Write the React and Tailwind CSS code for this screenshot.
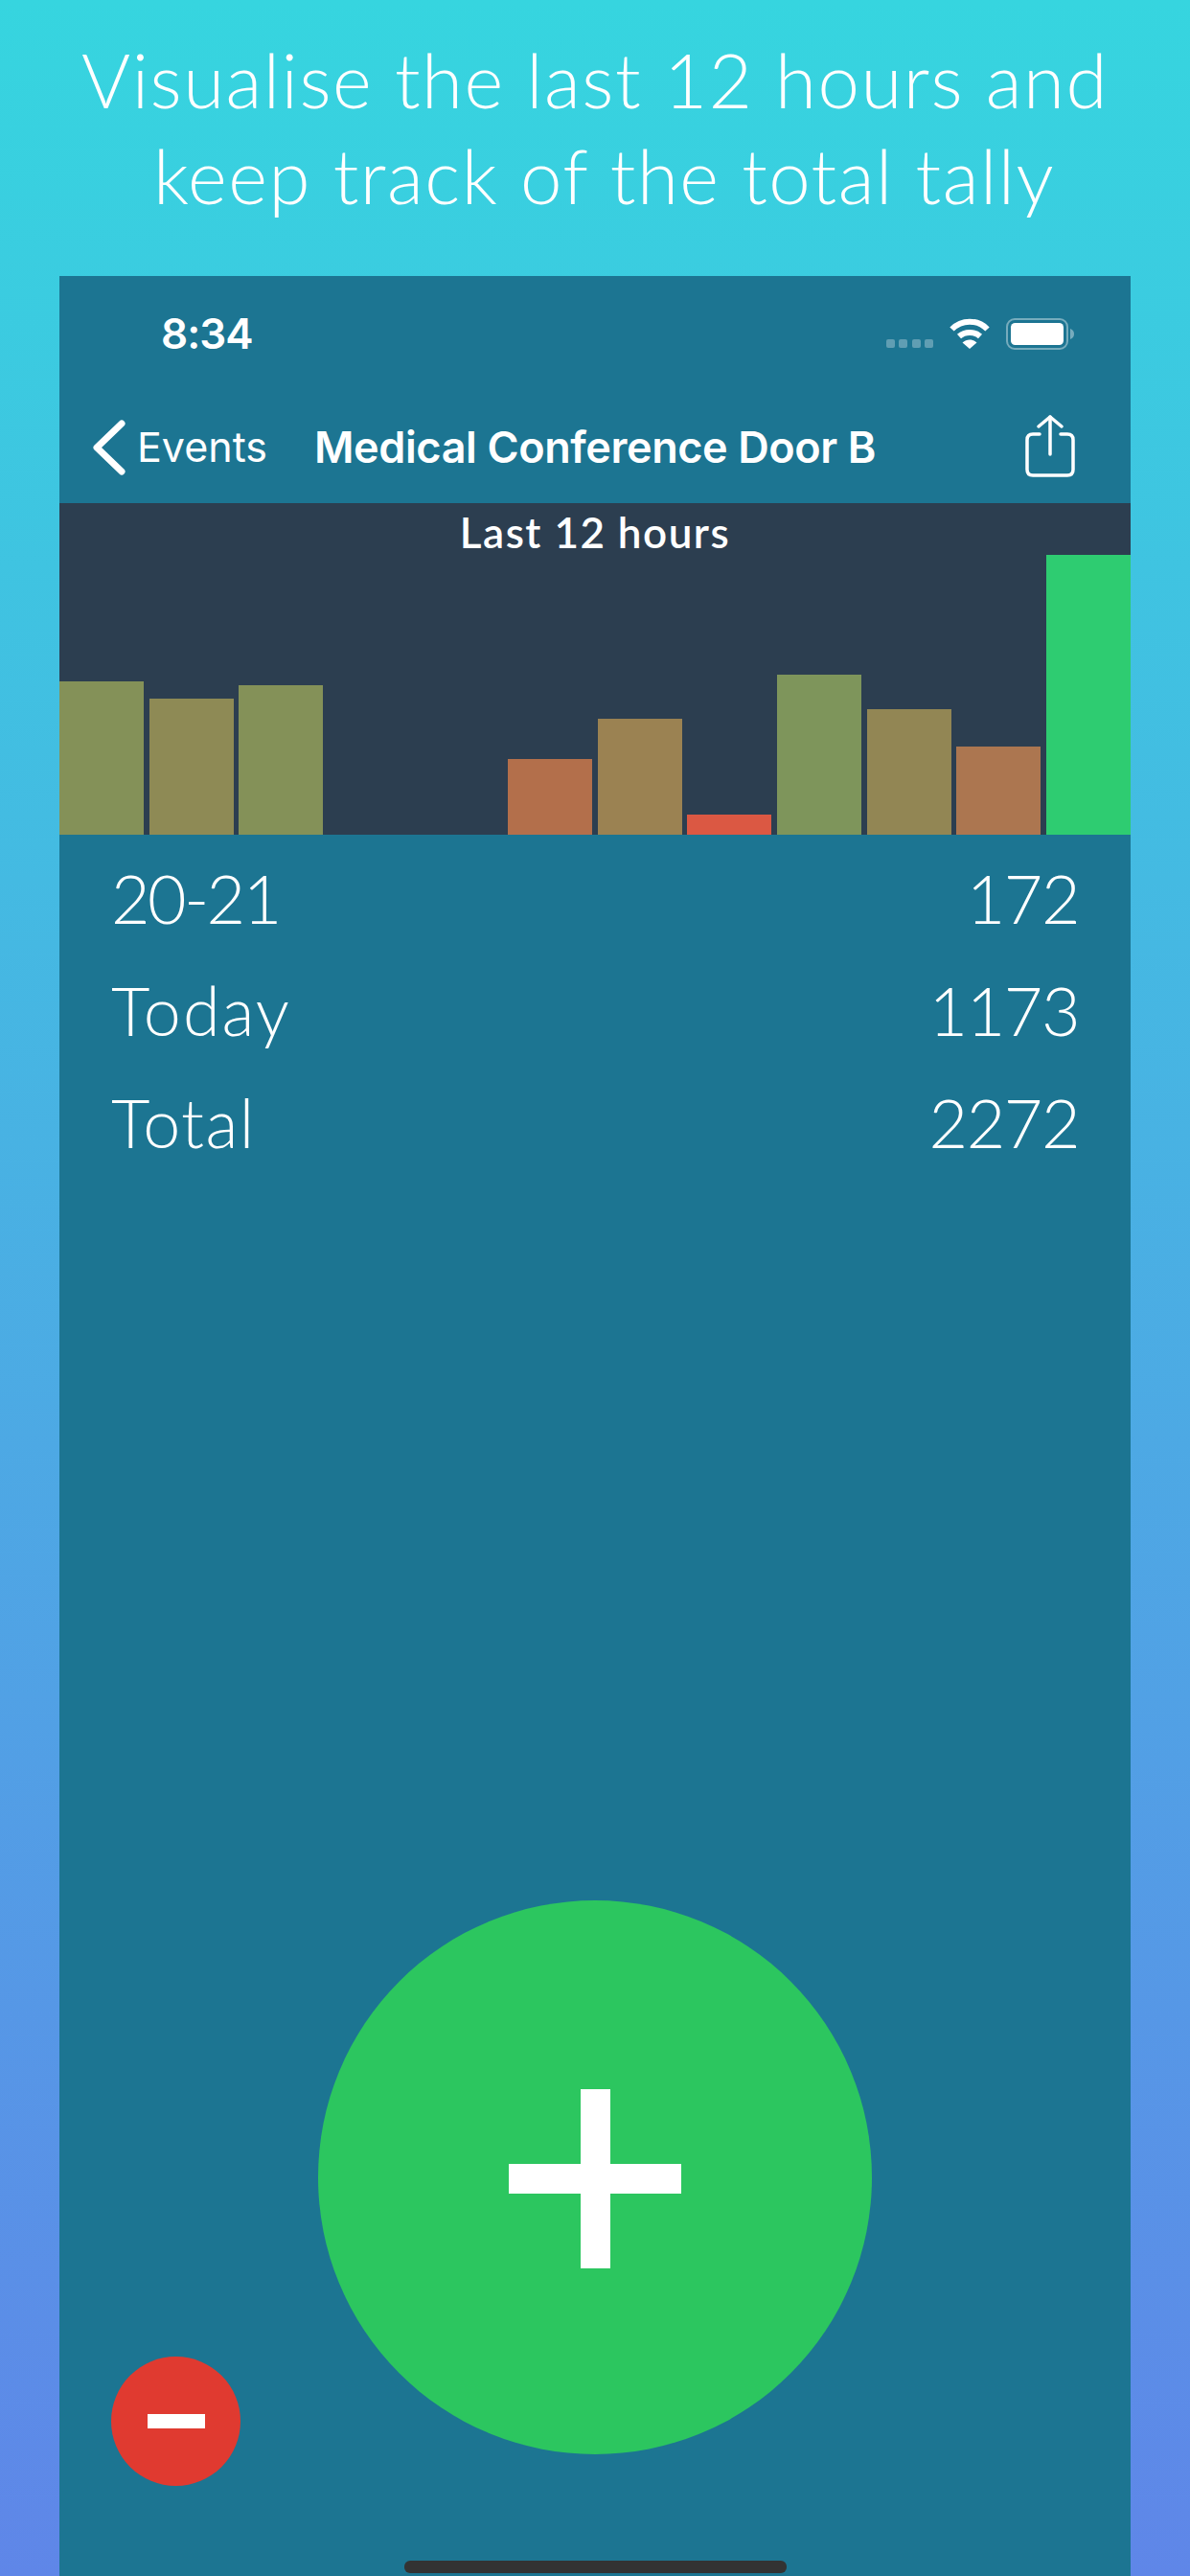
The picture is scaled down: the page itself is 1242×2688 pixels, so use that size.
const bars = [
  { h: 160, color: 'bg-[#849158]' },
  { h: 142, color: 'bg-[#8e8a55]' },
  { h: 156, color: 'bg-[#849158]' },
  { h: 0, color: '' },
  { h: 0, color: '' },
  { h: 79, color: 'bg-[#b36f4b]' },
  { h: 121, color: 'bg-[#9b8252]' },
  { h: 21, color: 'bg-[#db5843]' },
  { h: 167, color: 'bg-[#7e955b]' },
  { h: 131, color: 'bg-[#928654]' },
  { h: 92, color: 'bg-[#ac7650]' },
  { h: 292, color: 'bg-[#2ecc71]' },
]

const stats = [
  { label: '20-21', track: 'tracking-[-2.5px]', value: '172' },
  { label: 'Today', track: 'tracking-[2px]', value: '1173' },
  { label: 'Total', track: 'tracking-[1.4px]', value: '2272' },
]

function StatusBar() {
  return (
    <div className="flex h-[120px] items-center pl-[106px] pr-[59px] font-['Inter',sans-serif] text-white">
      <span className="text-[44px] font-semibold tracking-[-1px]">8:34</span>
      <div className="ml-auto flex items-center">
        <div className="mt-[20px] flex gap-[4.5px]">
          <span className="h-[9px] w-[9px] rounded-[2px] bg-white/30" />
          <span className="h-[9px] w-[9px] rounded-[2px] bg-white/30" />
          <span className="h-[9px] w-[9px] rounded-[2px] bg-white/30" />
          <span className="h-[9px] w-[9px] rounded-[2px] bg-white/30" />
        </div>
        <svg className="ml-[17px]" width="42" height="32" viewBox="0 0 42 32" fill="none" stroke="white" strokeWidth="6">
          <path d="M2.5 11.5 C12.5 1 29.5 1 39.5 11.5" />
          <path d="M10 19 C16 13.5 26 13.5 32 19" />
          <path d="M21 32 L13.5 25.5 C18 21.5 24 21.5 28.5 25.5 Z" fill="white" stroke="none" />
        </svg>
        <svg className="ml-[17px]" width="71" height="33" viewBox="0 0 71 33" fill="none">
          <rect x="1" y="1" width="63" height="31" rx="8" stroke="white" strokeOpacity="0.4" strokeWidth="2" />
          <rect x="5" y="5" width="55" height="23" rx="4.5" fill="white" />
          <path d="M67 11 C70 12 71 14 71 16.5 C71 19 70 21 67 22 Z" fill="white" fillOpacity="0.4" />
        </svg>
      </div>
    </div>
  )
}

function NavBar() {
  return (
    <div className="flex h-[117px] items-center pl-[35px] pr-[58px] text-white">
      <svg width="34" height="58" viewBox="0 0 34 58" fill="none" stroke="white" strokeWidth="7" strokeLinecap="round" strokeLinejoin="round">
        <path d="M30 4 L4 29 L30 54" />
      </svg>
      <span className="ml-[12px] font-['Inter',sans-serif] text-[43px] tracking-[0px]">Events</span>
      <span className="ml-[49px] font-['Inter',sans-serif] text-[45px] font-semibold tracking-[-0.4px]">Medical Conference Door B</span>
      <svg className="ml-auto -translate-y-[1px]" width="52" height="66" viewBox="0 0 52 66" fill="none" stroke="white" strokeWidth="3.5" strokeLinecap="round" strokeLinejoin="round">
        <path d="M15 20 H8 C4 20 2 22 2 26 V57 C2 61 4 63 8 63 H44 C48 63 50 61 50 57 V26 C50 22 48 20 44 20 H37" />
        <path d="M26 41 V2" />
        <path d="M14 12 L26 2 L38 12" />
      </svg>
    </div>
  )
}

function Chart() {
  return (
    <div className="flex h-[346px] flex-col bg-[#2c3e50]">
      <div className="h-[54px] text-center font-['Lato',sans-serif] text-[44px] font-semibold leading-[60px] tracking-[1.5px] text-white">Last 12 hours</div>
      <div className="grid flex-1 grid-cols-12 items-end gap-x-[5.6px]">
        {bars.map((bar, i) => (
          <div key={i} className={bar.color} style={{ height: bar.h }} />
        ))}
      </div>
    </div>
  )
}

export default function App() {
  return (
    <div className="flex h-[2688px] w-[1242px] flex-col overflow-hidden bg-linear-to-b/srgb from-[#36d5df] to-[#5f86e8] px-[62px]">
      <h1 className="h-[288px] pt-[33px] text-center font-['Lato',sans-serif] text-[78px] font-light leading-[100px] tracking-[1.5px] text-white">
        <span className="block">Visualise the last 12 hours and</span>
        <span className="block pl-[19px]">keep track of the total tally</span>
      </h1>

      <div className="flex flex-1 flex-col bg-[#1c7592]">
        <StatusBar />
        <NavBar />
        <Chart />

        <div className="px-[54px] pt-[8px] font-['Lato',sans-serif] text-[70px] font-light text-white">
          {stats.map((row) => (
            <div key={row.label} className="flex h-[117px] items-center justify-between">
              <span className={row.track}>{row.label}</span>
              <span className="tracking-[-1.5px]">{row.value}</span>
            </div>
          ))}
        </div>

        <div className="mt-auto grid h-[611px] grid-cols-[270px_578px_270px]">
          <div className="self-end pl-[54px]">
            <button className="flex h-[135px] w-[135px] items-center justify-center rounded-full bg-[#e03a30]">
              <span className="h-[15px] w-[60px] bg-white" />
            </button>
          </div>
          <button className="relative h-[578px] w-[578px] rounded-full bg-[#2cc65f]">
            <span className="absolute left-[199px] top-[275px] h-[31px] w-[180px] bg-white" />
            <span className="absolute left-[274px] top-[197px] h-[187px] w-[31px] bg-white" />
          </button>
        </div>

        <div className="mx-auto mb-[3px] mt-[78px] h-[13px] w-[399px] rounded-[6px] bg-[#333333]" />
      </div>
    </div>
  )
}
